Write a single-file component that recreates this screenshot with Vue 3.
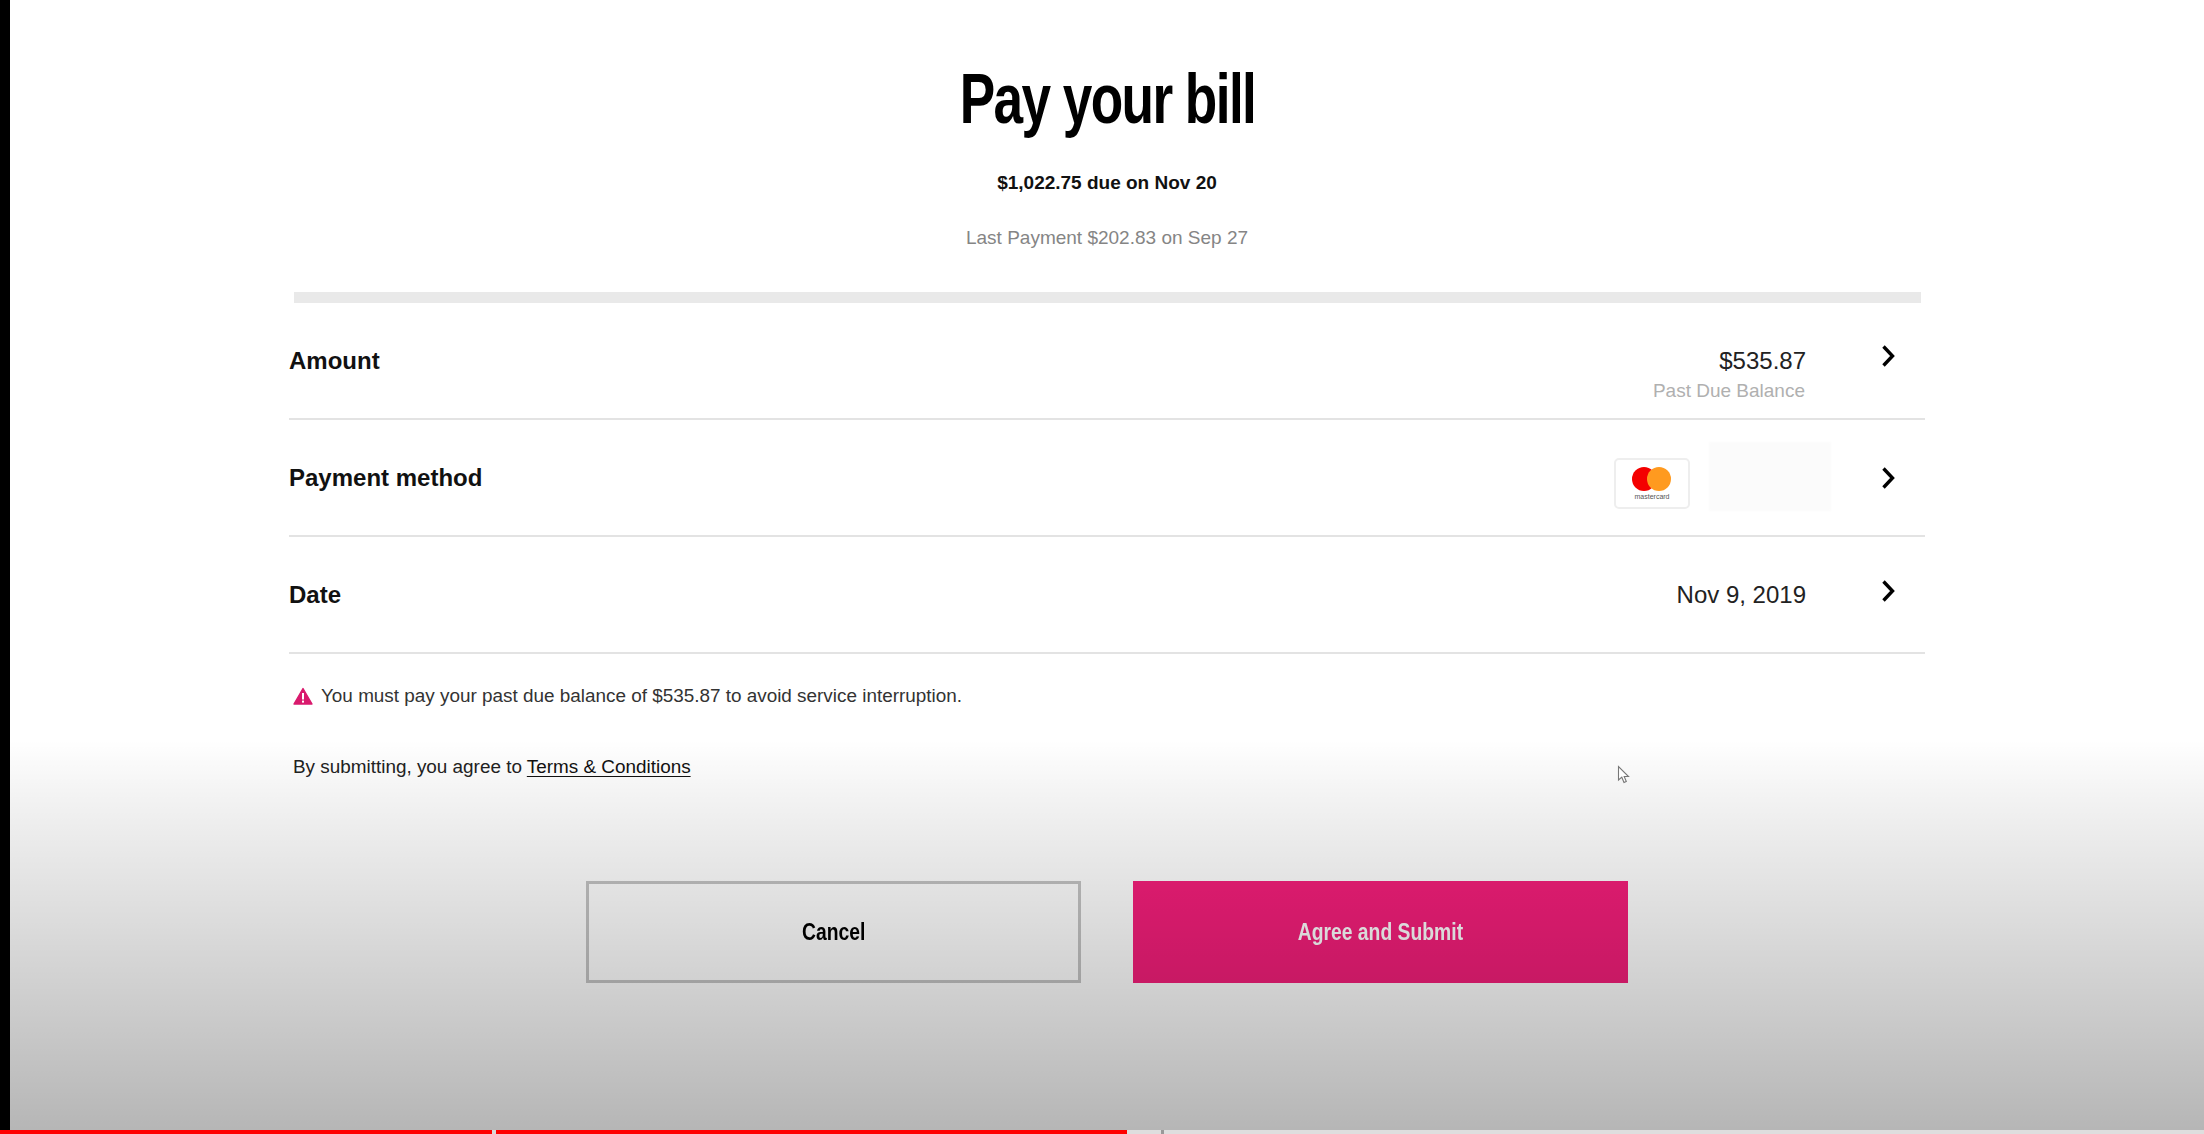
<template>
  <div class="page">
    <div class="edge"></div>
    <main class="content">
      <header class="head">
        <h1><span>Pay your bill</span></h1>
        <p class="due">$1,022.75 due on Nov 20</p>
        <p class="last">Last Payment $202.83 on Sep 27</p>
      </header>
      <div class="bar"></div>

      <div class="row row-amount">
        <div class="label">Amount</div>
        <div class="value">
          <div>$535.87</div>
          <div class="hint">Past Due Balance</div>
        </div>
        <svg class="chevron" viewBox="0 0 14 24"><path d="M2.5 2.5 11.5 12 2.5 21.5" /></svg>
      </div>

      <div class="row row-method">
        <div class="label">Payment method</div>
        <div class="method">
          <div class="card">
            <svg width="40" height="24" viewBox="0 0 40 24">
              <circle cx="12" cy="12" r="12" fill="#f40000" />
              <circle cx="27" cy="12" r="12" fill="#ff9a1f" />
            </svg>
            <span>mastercard</span>
          </div>
          <div class="blurred"></div>
        </div>
        <svg class="chevron" viewBox="0 0 14 24"><path d="M2.5 2.5 11.5 12 2.5 21.5" /></svg>
      </div>

      <div class="row row-date">
        <div class="label">Date</div>
        <div class="value">Nov 9, 2019</div>
        <svg class="chevron" viewBox="0 0 14 24"><path d="M2.5 2.5 11.5 12 2.5 21.5" /></svg>
      </div>

      <div class="notes">
        <div class="warning">
          <svg width="20" height="18" viewBox="0 0 20 18">
            <path d="M10 1.5 19 17H1Z" fill="#d91a6d" stroke="#d91a6d" stroke-width="1.4" stroke-linejoin="round" />
            <rect x="9" y="6" width="2" height="6.5" fill="#fff" />
            <rect x="9" y="13.6" width="2" height="2" fill="#fff" />
          </svg>
          <span>You must pay your past due balance of $535.87 to avoid service interruption.</span>
        </div>
        <div class="terms">By submitting, you agree to <a href="#">Terms &amp; Conditions</a></div>
      </div>

      <div class="actions">
        <button class="btn cancel"><span>Cancel</span></button>
        <button class="btn submit"><span>Agree and Submit</span></button>
      </div>
    </main>

    <div class="shade"></div>
    <svg class="cursor" width="14" height="20" viewBox="0 0 14 20">
      <path d="M1.5 1.5V15L4.8 12.2 7 17.5 9.3 16.5 7.2 11.5H11.5Z" fill="#fff" stroke="#777" stroke-width="1.1" />
    </svg>
    <div class="progress">
      <i v-for="seg in segments" :key="seg.w" :style="{ width: seg.w + 'px', background: seg.c }"></i>
    </div>
  </div>
</template>

<script setup>
const segments = [
  { w: 492, c: '#ff0000' },
  { w: 4, c: '#d9d9d9' },
  { w: 631, c: '#ff0000' },
  { w: 34, c: '#dedede' },
  { w: 3, c: '#999999' },
  { w: 1040, c: '#dedede' }
]
</script>

<style>
html,
body {
  margin: 0;
  overflow: hidden;
  background: #fff;
}
</style>

<style scoped>
.page {
  position: relative;
  display: flex;
  width: 2204px;
  height: 1134px;
  overflow: hidden;
  background: #fff;
  color: #111;
  font-family: "Liberation Sans", Arial, sans-serif;
}

.edge {
  width: 10px;
  background: #000;
  flex: none;
}

.content {
  width: 1636px;
  margin-left: 279px;
  flex: none;
}

.head {
  text-align: center;
  padding-top: 59px;
}

h1 {
  margin: 0;
  font-size: 70px;
  line-height: 80px;
  font-weight: 700;
  color: #000;
}

h1 span {
  display: inline-block;
  letter-spacing: -2.1px;
  transform: scaleX(0.76);
}

.due {
  margin: 33px 0 0;
  font-size: 19px;
  line-height: 22px;
  font-weight: 700;
}

.last {
  margin: 33px 0 0;
  font-size: 19px;
  line-height: 22px;
  color: #858585;
}

.bar {
  height: 11px;
  margin: 43px 4px 0 5px;
  background: #e9e9e9;
}

.row {
  display: flex;
  align-items: center;
  height: 115px;
  border-bottom: 2px solid #e3e3e3;
  font-size: 24px;
}

.label {
  flex: 1;
  font-weight: 700;
}

.value {
  text-align: right;
  color: #222;
  line-height: 27px;
}

.hint {
  margin: 5px 1px 0 0;
  font-size: 19px;
  line-height: 24px;
  color: #b0b0b0;
}

.chevron {
  width: 14px;
  height: 24px;
  margin: 0 30px 0 75px;
  flex: none;
  fill: none;
  stroke: #000;
  stroke-width: 3.4;
}

.row-amount .value {
  margin-top: 29px;
}

.row-amount .chevron {
  margin-bottom: 10px;
}

.row-date .chevron {
  margin-bottom: 8px;
}

.method {
  display: flex;
  align-items: center;
  gap: 19px;
  margin: 2px -25px 0 0;
}

.card {
  display: flex;
  flex-direction: column;
  align-items: center;
  box-sizing: border-box;
  width: 76px;
  height: 51px;
  margin-top: 10px;
  padding-top: 7px;
  border: 2px solid #eeeeee;
  border-radius: 5px;
}

.card span {
  margin-top: 2px;
  font-size: 7px;
  line-height: 8px;
  color: #555;
}

.blurred {
  width: 122px;
  height: 69px;
  margin-bottom: 4px;
  background: #fbfbfb;
  filter: blur(1px);
}

.notes {
  padding: 31px 0 0 4px;
  font-size: 18.9px;
  line-height: 22px;
  color: #333;
}

.warning {
  display: flex;
  align-items: center;
  gap: 8px;
}

.terms {
  margin-top: 49px;
  color: #222;
}

.terms a {
  color: #111;
  text-decoration: underline;
  text-underline-offset: 3px;
}

.actions {
  display: flex;
  gap: 52px;
  margin: 103px 0 0 297px;
}

.btn {
  box-sizing: border-box;
  width: 495px;
  height: 102px;
  padding: 0;
  font-family: inherit;
  font-size: 23px;
  font-weight: 700;
}

.btn span {
  display: inline-block;
  transform: scaleX(0.84);
}

.cancel {
  border: 3px solid #c4c4c4;
  background: #fff;
  color: #000;
}

.submit {
  border: 0;
  background: #f41e7a;
  color: #fff;
}

.shade {
  position: absolute;
  left: 0;
  right: 0;
  top: 740px;
  bottom: 0;
  background: linear-gradient(rgba(0, 0, 0, 0), rgba(0, 0, 0, 0.05) 15%, rgba(0, 0, 0, 0.29));
  pointer-events: none;
}

.cursor {
  position: absolute;
  left: 1617px;
  top: 765px;
}

.progress {
  position: absolute;
  left: 0;
  right: 0;
  bottom: 0;
  display: flex;
  height: 4px;
}

.progress i {
  display: block;
  flex: none;
}
</style>
